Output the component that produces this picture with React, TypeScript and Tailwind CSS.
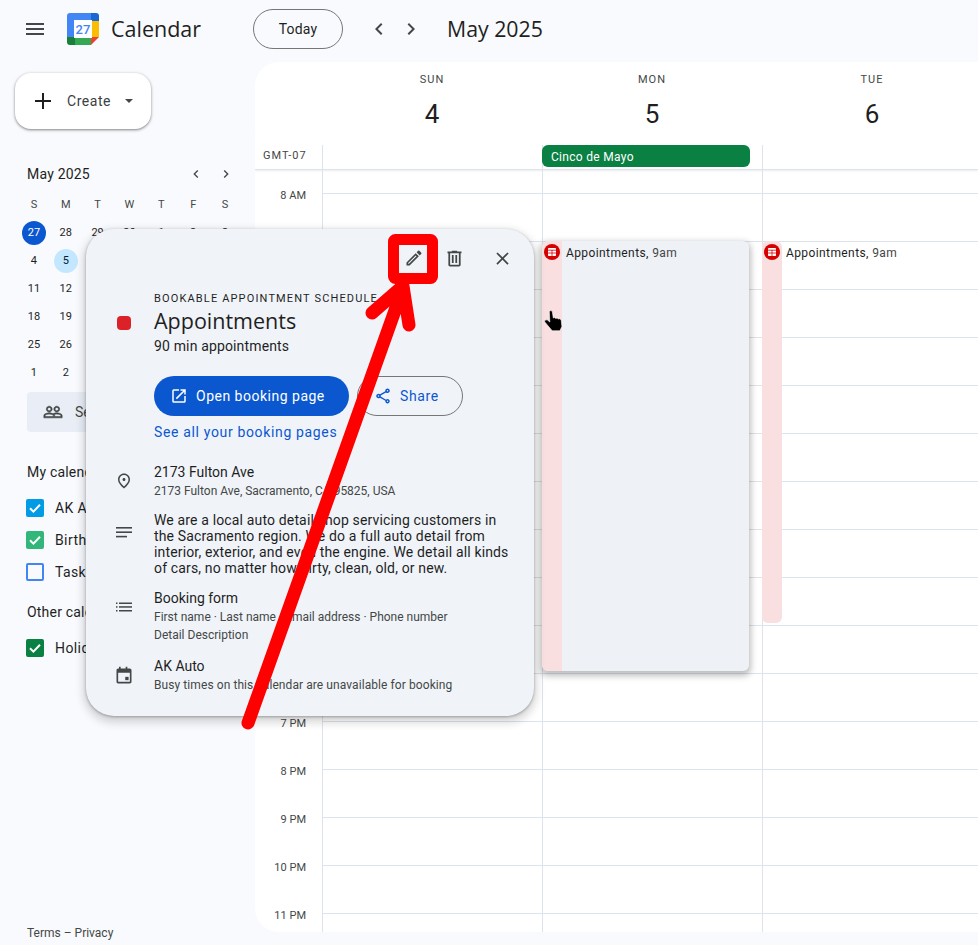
import React from "react";

const ROBOTO = "font-['Roboto','Liberation_Sans',sans-serif]";
const HEADING = "font-['Open_Sans','Roboto',sans-serif]";

const miniWeeks = [
    ["27", "28", "29", "30", "1", "2", "3"],
    ["4", "5", "6", "7", "8", "9", "10"],
    ["11", "12", "13", "14", "15", "16", "17"],
    ["18", "19", "20", "21", "22", "23", "24"],
    ["25", "26", "27", "28", "29", "30", "31"],
    ["1", "2", "3", "4", "5", "6", "7"],
];

const hours = ["9 AM", "10 AM", "11 AM", "12 PM", "1 PM", "2 PM", "3 PM", "4 PM", "5 PM", "6 PM", "7 PM", "8 PM", "9 PM", "10 PM", "11 PM"];

function Icon({ d, className, children }: { d?: string; className?: string; children?: React.ReactNode }) {
    return (
        <svg viewBox="0 0 24 24" fill="currentColor" className={className}>
            {d && <path d={d} />}
            {children}
        </svg>
    );
}

function CalendarLogo() {
    return (
        <svg viewBox="0 0 32 32" className="h-8 w-8 shrink-0">
            <path d="M3 0h21v8H8v16H0V3a3 3 0 0 1 3-3z" fill="#4285f4" />
            <path d="M24 0h5a3 3 0 0 1 3 3v5h-8z" fill="#1967d2" />
            <rect x="24" y="8" width="8" height="16" fill="#fbbc04" />
            <rect x="8" y="24" width="16" height="8" fill="#34a853" />
            <path d="M0 24h8v8H3a3 3 0 0 1-3-3z" fill="#188038" />
            <path d="M24 24h8l-8 8z" fill="#ea4335" />
            <rect x="7" y="7" width="18" height="18" fill="#fff" />
            <text x="16" y="21" textAnchor="middle" fontSize="13" fontWeight="500" fill="#4285f4" fontFamily="Roboto, sans-serif">27</text>
        </svg>
    );
}

function EventIcon() {
    return (
        <span className="flex h-4 w-4 shrink-0 items-center justify-center rounded-full bg-[#d50000]">
            <svg viewBox="0 0 8 8" className="h-2 w-2">
                <rect width="8" height="8" rx="0.8" fill="#fff" />
                <path d="M4 2v6M0 2.2h8M0 5h8" stroke="#d50000" strokeWidth="0.8" />
            </svg>
        </span>
    );
}

function CalendarCheck({ label, box, top, checked = true }: { label: string; box: string; top: string; checked?: boolean }) {
    return (
        <div className={`flex h-8 items-center ${top}`}>
            <span className={`ml-[26px] flex h-[18px] w-[18px] items-center justify-center rounded-[2px] ${box}`}>
                {checked && (
                    <svg viewBox="0 0 18 18" className="h-[18px] w-[18px]">
                        <path d="M4 9.3l3.4 3.3L14 5.8" fill="none" stroke="#fff" strokeWidth="2" />
                    </svg>
                )}
            </span>
            <span className="ml-[11px] whitespace-nowrap text-sm tracking-[0.4px] text-[#1f1f1f]">{label}</span>
        </div>
    );
}

function Sidebar() {
    return (
        <aside className="w-[255px] shrink-0">
            <div className="ml-[15px] mt-[15px] flex h-14 w-[136px] items-center rounded-2xl bg-white shadow-[0_1px_3px_1px_rgba(0,0,0,0.15),0_1px_2px_rgba(0,0,0,0.3)]">
                <Icon className="ml-4 h-6 w-6 text-[#1f1f1f]" d="M20 13h-7v7h-2v-7H4v-2h7V4h2v7h7v2z" />
                <span className="ml-3 text-sm font-[450] tracking-[0.55px] text-[#3c4043]">Create</span>
                <span className="ml-[14px] h-0 w-0 border-x-4 border-t-4 border-x-transparent border-t-[#444746]" />
            </div>

            <div className="ml-[27px] mt-[33px] flex h-6 w-[207px] items-center justify-between">
                <span className="text-sm font-[450] tracking-[0.2px] text-[#1f1f1f]">May 2025</span>
                <div className="flex items-center gap-[14px]">
                    <Icon className="h-4 w-4 text-[#444746]" d="M15.41 7.41L14 6l-6 6 6 6 1.41-1.41L10.83 12z" />
                    <Icon className="h-4 w-4 text-[#444746]" d="M8.59 16.59L10 18l6-6-6-6-1.41 1.41L13.17 12z" />
                </div>
            </div>

            <div className="ml-[18px] mt-[7px] w-[223px]">
                <div className="mb-[2px] grid h-6 grid-cols-7 items-center text-center text-[11px] font-[450] text-[#444746]">
                    {["S", "M", "T", "W", "T", "F", "S"].map((d, i) => (
                        <span key={i}>{d}</span>
                    ))}
                </div>
                {miniWeeks.map((week, w) => (
                    <div key={w} className="grid h-7 grid-cols-7 items-center justify-items-center text-[11px] font-[450] text-[#1f1f1f]">
                        {week.map((d, i) => (
                            <span
                                key={i}
                                className={`flex h-6 w-6 items-center justify-center rounded-full ${
                                    w === 0 && i === 0 ? "bg-[#0b57d0] text-white" : w === 1 && i === 1 ? "bg-[#c2e7ff] text-[#001d35]" : ""
                                }`}
                            >
                                {d}
                            </span>
                        ))}
                    </div>
                ))}
            </div>

            <div className="ml-[27px] mt-[5px] flex h-10 w-[213px] items-center rounded bg-[#e9eef6] text-sm text-[#444746]">
                <Icon
                    className="ml-4 h-5 w-5 stroke-current stroke-[0.7px]"
                    d="M16.5 13c-1.2 0-3.07.34-4.5 1-1.43-.67-3.3-1-4.5-1C5.33 13 1 14.08 1 16.25V19h22v-2.75c0-2.17-4.33-3.25-6.5-3.25zm-4 4.5h-10v-1.25c0-.54 2.56-1.75 5-1.75s5 1.21 5 1.75v1.25zm9 0H14v-1.25c0-.46-.2-.86-.52-1.22.88-.3 1.96-.53 3.02-.53 2.44 0 5 1.21 5 1.75v1.25zM7.5 12c1.93 0 3.5-1.57 3.5-3.5S9.43 5 7.5 5 4 6.57 4 8.5 5.57 12 7.5 12zm0-5.5c1.1 0 2 .9 2 2s-.9 2-2 2-2-.9-2-2 .9-2 2-2zm9 5.5c1.93 0 3.5-1.57 3.5-3.5S18.43 5 16.5 5 13 6.57 13 8.5s1.57 3.5 3.5 3.5zm0-5.5c1.1 0 2 .9 2 2s-.9 2-2 2-2-.9-2-2 .9-2 2-2z"
                />
                <span className="ml-3">Search for people</span>
            </div>

            <div className="ml-[27px] mt-[30px] h-5 text-sm font-[450] leading-5 tracking-[0.2px] text-[#1f1f1f]">My calendars</div>
            <CalendarCheck label="AK Auto" box="bg-[#039be5]" top="mt-[10px]" />
            <CalendarCheck label="Birthdays" box="bg-[#33b679]" top="" />
            <CalendarCheck label="Tasks" box="border-2 border-[#4285f4]" top="" checked={false} />
            <div className="ml-[27px] mt-[14px] h-5 text-sm font-[450] leading-5 tracking-[0.2px] text-[#1f1f1f]">Other calendars</div>
            <CalendarCheck label="Holidays in United States" box="bg-[#0b8043]" top="mt-[10px]" />

            <div className="ml-[27px] mt-[261px] text-xs text-[#444746]">Terms – Privacy</div>
        </aside>
    );
}

function DayHead({ name, num }: { name: string; num: string }) {
    return (
        <div className="flex w-[220px] shrink-0 flex-col items-center pt-[11px]">
            <span className="text-[11px] leading-[14px] tracking-[1px] text-[#444746]">{name}</span>
            <span className="mt-[11px] text-[26px] leading-8 text-[#1f1f1f]">{num}</span>
        </div>
    );
}

function DayColumn({ children }: { children?: React.ReactNode }) {
    return (
        <div className="relative w-[220px] shrink-0 border-l border-[#dde3ea]">
            <div className="h-6 border-b border-[#dde3ea]" />
            {hours.map((h) => (
                <div key={h} className="h-12 border-b border-[#dde3ea]" />
            ))}
            <div className="h-12" />
            {children}
        </div>
    );
}

function EventLabel() {
    return (
        <div className="whitespace-nowrap pl-1 pt-1 text-xs leading-4 tracking-[0.4px] text-[#1f1f1f]">
            <span className="font-[450]">Appointments,</span> <span className="text-[#444746]">9am</span>
        </div>
    );
}

function Main() {
    return (
        <main className="mt-1 h-[870px] flex-1 overflow-hidden rounded-l-3xl bg-white">
            <div className="flex h-[70px] pl-[67px]">
                <DayHead name="SUN" num="4" />
                <DayHead name="MON" num="5" />
                <DayHead name="TUE" num="6" />
            </div>
            <div className="flex h-[38px] border-b border-[#dde3ea] shadow-[0_1px_2px_rgba(0,0,0,0.08)]">
                <div className="w-[67px] shrink-0 pl-2 pt-4 text-[11px] leading-4 tracking-[1px] text-[#444746]">GMT-07</div>
                <div className="mt-[13px] w-[220px] shrink-0 border-l border-[#dde3ea]" />
                <div className="mt-[13px] w-[220px] shrink-0 border-l border-[#dde3ea]">
                    <div className="-ml-px h-[22px] w-[208px] rounded-md bg-[#0b8043] pl-[9px] text-xs font-[450] leading-6 tracking-[0.3px] text-white">Cinco de Mayo</div>
                </div>
                <div className="mt-[13px] w-[220px] shrink-0 border-l border-[#dde3ea]" />
            </div>
            <div className="flex">
                <div className="w-[67px] shrink-0">
                    <div className="flex h-6 items-end justify-end">
                        <span className="mb-[-9px] mr-4 text-[11px] leading-[14px] text-[#444746]">8 AM</span>
                    </div>
                    {hours.map((h) => (
                        <div key={h} className="flex h-12 items-end justify-end">
                            <span className="mb-[-9px] mr-4 text-[11px] leading-[14px] text-[#444746]">{h}</span>
                        </div>
                    ))}
                </div>
                <DayColumn />
                <DayColumn>
                    <div className="absolute left-[-1px] top-[71px] flex h-[430px] w-[207px] overflow-hidden rounded-md bg-[#eef1f6] shadow-[0_3px_6px_2px_rgba(0,0,0,0.25)]">
                        <div className="w-5 shrink-0 bg-[#fadfe0] pl-[2px] pt-[3px]">
                            <EventIcon />
                        </div>
                        <EventLabel />
                    </div>
                </DayColumn>
                <DayColumn>
                    <div className="absolute left-[-1px] top-[71px] flex h-[382px]">
                        <div className="w-5 shrink-0 rounded-md bg-[#fadfe0] pl-[2px] pt-[3px]">
                            <EventIcon />
                        </div>
                        <EventLabel />
                    </div>
                </DayColumn>
            </div>
        </main>
    );
}

function DetailRow({ icon, children, className }: { icon: React.ReactNode; children: React.ReactNode; className?: string }) {
    return (
        <div className={`flex ${className ?? ""}`}>
            <div className="w-[68px] shrink-0">{icon}</div>
            <div className="min-w-0 flex-1 pr-6">{children}</div>
        </div>
    );
}

function Popup() {
    return (
        <div className="absolute left-[86px] top-[229px] h-[487px] w-[448px] rounded-[28px] bg-[#f0f4f9] shadow-[0_4px_8px_3px_rgba(0,0,0,0.15),0_1px_3px_rgba(0,0,0,0.3)]">
            <div className="flex h-[62px] items-center justify-end pb-[4px] pr-[21px] text-[#444746]">
                <Icon
                    className="h-5 w-5"
                    d="M14.06 9.02l.92.92L5.92 19H5v-.92l9.06-9.06M17.66 3c-.25 0-.51.1-.7.29l-1.83 1.83 3.75 3.75 1.83-1.83c.39-.39.39-1.02 0-1.41l-2.34-2.34c-.2-.2-.45-.29-.71-.29zm-3.6 3.19L3 17.25V21h3.75L17.81 9.94l-3.75-3.75z"
                />
                <Icon className="ml-[20px] h-[21px] w-[21px]" d="M15 4V3H9v1H4v2h1v13c0 1.1.9 2 2 2h10c1.1 0 2-.9 2-2V6h1V4h-5zm2 15H7V6h10v13zM9 8h2v9H9zm4 0h2v9h-2z" />
                <Icon className="ml-[27px] h-[21px] w-[21px]" d="M19 6.41L17.59 5 12 10.59 6.41 5 5 6.41 10.59 12 5 17.59 6.41 19 12 13.41 17.59 19 19 17.59 13.41 12z" />
            </div>

            <div className="flex">
                <div className="w-[68px] shrink-0 pl-[31px] pt-[25px]">
                    <div className="h-[14px] w-[14px] rounded bg-[#dc2128]" />
                </div>
                <div>
                    <div className="text-[11px] font-[450] uppercase leading-4 tracking-[1.15px] text-[#1f1f1f]">Bookable appointment schedule</div>
                    <div className={`mb-px text-[21.5px] leading-7 text-[#1f1f1f] ${HEADING}`}>Appointments</div>
                    <div className="text-sm leading-5 tracking-[0.15px] text-[#1f1f1f]">90 min appointments</div>
                    <div className="mt-5 flex gap-2">
                        <div className="flex h-10 w-[195px] items-center rounded-full bg-[#0b57d0] pl-4 text-sm font-[450] tracking-[0.5px] text-white">
                            <Icon className="h-[18px] w-[18px]" d="M19 19H5V5h7V3H5a2 2 0 00-2 2v14a2 2 0 002 2h14c1.1 0 2-.9 2-2v-7h-2v7zM14 3v2h3.59l-9.83 9.83 1.41 1.41L19 6.41V10h2V3h-7z" />
                            <span className="ml-2">Open booking page</span>
                        </div>
                        <div className="flex h-10 w-[106px] items-center rounded-full border border-[#747775] pl-4 text-sm font-[450] tracking-[0.6px] text-[#0b57d0]">
                            <Icon
                                className="h-[18px] w-[18px]"
                                d="M18 16.08c-.76 0-1.44.3-1.96.77L8.91 12.7c.05-.23.09-.46.09-.7s-.04-.47-.09-.7l7.05-4.11c.54.5 1.25.81 2.04.81 1.66 0 3-1.34 3-3s-1.34-3-3-3-3 1.34-3 3c0 .24.04.47.09.7L8.04 9.81C7.5 9.31 6.79 9 6 9c-1.66 0-3 1.34-3 3s1.34 3 3 3c.79 0 1.5-.31 2.04-.81l7.12 4.16c-.05.21-.08.43-.08.65 0 1.61 1.31 2.92 2.92 2.92s2.92-1.31 2.92-2.92-1.31-2.92-2.92-2.92zM18 4c.55 0 1 .45 1 1s-.45 1-1 1-1-.45-1-1 .45-1 1-1zM6 13c-.55 0-1-.45-1-1s.45-1 1-1 1 .45 1 1-.45 1-1 1zm12 7.02c-.55 0-1-.45-1-1s.45-1 1-1 1 .45 1 1-.45 1-1 1z"
                            />
                            <span className="ml-2">Share</span>
                        </div>
                    </div>
                    <div className="mt-[6px] text-sm font-[450] leading-5 tracking-[0.65px] text-[#0b57d0]">See all your booking pages</div>
                </div>
            </div>

            <DetailRow
                className="mt-5"
                icon={
                    <Icon
                        className="ml-[29px] mt-[10px] h-[18px] w-[18px] text-[#444746]"
                        d="M12 12c-1.1 0-2-.9-2-2s.9-2 2-2 2 .9 2 2-.9 2-2 2zm6-1.8C18 6.57 15.35 4 12 4s-6 2.57-6 6.2c0 2.34 1.95 5.44 6 9.14 4.05-3.7 6-6.8 6-9.14zM12 2c4.2 0 8 3.22 8 8.2 0 3.32-2.67 7.25-8 11.8-5.33-4.55-8-8.48-8-11.8C4 5.22 7.8 2 12 2z"
                    />
                }
            >
                <div className="text-sm leading-5 text-[#1f1f1f]">2173 Fulton Ave</div>
                <div className="text-xs leading-[18px] text-[#444746]">2173 Fulton Ave, Sacramento, CA 95825, USA</div>
            </DetailRow>

            <DetailRow
                className="mt-3"
                icon={
                    <Icon className="ml-[26px] mt-2 h-6 w-6 text-[#444746]">
                        <rect x="4" y="7" width="16" height="1.6" />
                        <rect x="4" y="11.4" width="16" height="1.6" />
                        <rect x="4" y="15.8" width="11" height="1.6" />
                    </Icon>
                }
            >
                <p className="text-sm leading-4 tracking-[0.15px] text-[#1f1f1f]">
                    We are a local auto detail shop servicing customers in the Sacramento region. We do a full auto detail from interior, exterior, and even the engine. We detail all kinds of cars, no matter how dirty, clean, old, or new.
                </p>
            </DetailRow>

            <DetailRow
                className="mt-3"
                icon={
                    <Icon className="ml-[26px] mt-[7px] h-6 w-6 text-[#444746]">
                        <rect x="4" y="7.5" width="1.5" height="1.5" />
                        <rect x="4" y="11.2" width="1.5" height="1.5" />
                        <rect x="4" y="15" width="1.5" height="1.5" />
                        <rect x="7" y="7.5" width="13" height="1.5" />
                        <rect x="7" y="11.2" width="13" height="1.5" />
                        <rect x="7" y="15" width="13" height="1.5" />
                    </Icon>
                }
            >
                <div className="text-sm leading-5 text-[#1f1f1f]">Booking form</div>
                <div className="text-xs leading-[18px] text-[#444746]">First name · Last name · Email address · Phone number</div>
                <div className="text-xs leading-[18px] text-[#444746]">Detail Description</div>
            </DetailRow>

            <DetailRow
                className="mt-3"
                icon={
                    <Icon className="ml-[28px] mt-[10px] h-5 w-5 text-[#444746]" d="M17 3h-1V1h-2v2H8V1H6v2H5c-1.1 0-2 .9-2 2v14c0 1.1.9 2 2 2h14c1.1 0 2-.9 2-2V5c0-1.1-.9-2-2-2h-2zm2 16H5V8h14v11z">
                        <path d="M13.5 13h4v4h-4z" />
                    </Icon>
                }
            >
                <div className="text-sm leading-5 text-[#1f1f1f]">AK Auto</div>
                <div className="text-xs leading-[18px] tracking-[0.08px] text-[#444746]">Busy times on this calendar are unavailable for booking</div>
            </DetailRow>
        </div>
    );
}

export default function App() {
    return (
        <div className={`relative h-[945px] w-[978px] overflow-hidden bg-[#f8fafd] ${ROBOTO}`}>
            <header className="flex h-[58px] items-center">
                <Icon className="ml-[23px] h-6 w-6 text-[#444746]" d="M3 18h18v-2H3v2zm0-5h18v-2H3v2zm0-7v2h18V6H3z" />
                <div className="ml-5">
                    <CalendarLogo />
                </div>
                <span className={`ml-3 w-[90px] text-[21.5px] leading-8 text-[#1f1f1f] ${HEADING}`}>Calendar</span>
                <div className="ml-[52px] flex h-10 w-[90px] items-center justify-center rounded-full border border-[#747775] text-sm font-[450] tracking-[0.2px] text-[#1f1f1f]">Today</div>
                <Icon className="ml-6 h-6 w-6 text-[#444746]" d="M15.41 7.41L14 6l-6 6 6 6 1.41-1.41L10.83 12z" />
                <Icon className="ml-2 h-6 w-6 text-[#444746]" d="M8.59 16.59L10 18l6-6-6-6-1.41 1.41L13.17 12z" />
                <span className={`ml-6 text-[21.3px] leading-8 text-[#1f1f1f] ${HEADING}`}>May 2025</span>
            </header>
            <div className="flex">
                <Sidebar />
                <Main />
            </div>
            <Popup />

            {/* hand cursor */}
            <svg viewBox="544 309 19 23" className="absolute left-[544px] top-[309px] h-[23px] w-[19px]">
                <path
                    d="M549.3 311.5q1.6-2 3 0l1 6.5 1.2-.4 1.3.8 1.3-.3 1.4.9 1.3-.3 1.4 1.3.7 6.5-2 4.3h-7.7l-7.6-9q-.6-2.5 2.6-2l2.6 2.2z"
                    fill="#000"
                    stroke="#fff"
                    strokeWidth="0.6"
                />
            </svg>

            {/* red annotation */}
            <svg viewBox="0 0 978 945" className="pointer-events-none absolute left-0 top-0 h-[945px] w-[978px]">
                <rect x="393.5" y="239.5" width="39" height="39" rx="2" fill="none" stroke="#ff0000" strokeWidth="11" strokeLinejoin="round" />
                <path d="M248 723L403 288M372 313L403 286L409 325" fill="none" stroke="#ff0000" strokeWidth="13" strokeLinecap="round" strokeLinejoin="round" />
            </svg>
        </div>
    );
}
